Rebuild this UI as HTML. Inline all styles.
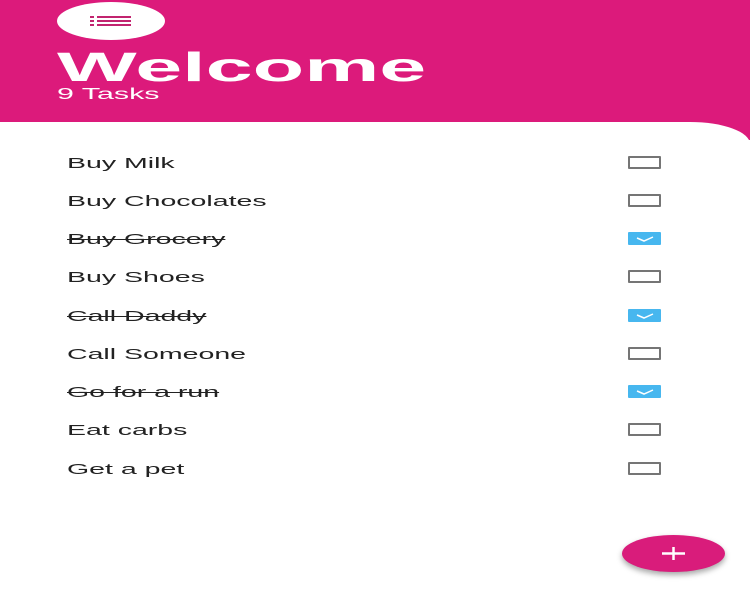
<!DOCTYPE html>
<html><head><style>
body{margin:0;width:750px;height:583px;overflow:hidden;background:#fff;font-family:"Liberation Sans",sans-serif;position:relative}
.hdr{position:absolute;left:0;top:0;width:750px;height:140px;background:#dc1a7b}
.card{position:absolute;left:0;top:122px;width:750px;height:470px;background:#fff;border-top-right-radius:60px 22px}
.menu{position:absolute;left:57px;top:2px;width:108px;height:38px;border-radius:50%;background:#fff}
.menu i{position:absolute;left:33px;height:2px;background:#c2246f;width:42px}
.t{position:absolute;transform-origin:0 0;white-space:nowrap}
.w{left:57px;top:44px;font-size:41px;font-weight:bold;color:#fff;transform:scaleX(2.06)}
.s{left:57px;top:86px;font-size:16px;color:#fff;transform:scaleX(1.9)}
.it{left:67px;font-size:15px;color:#222;transform:scaleX(1.9)}
.it.d{text-decoration:line-through}
.cb{position:absolute;left:628px;width:29px;height:9px;border:2px solid #757575;border-radius:1px}
.cb.c{background:#47b7ef;border-color:#47b7ef}
.fab{position:absolute;left:622px;top:535px;width:103px;height:37px;border-radius:50%;background:#d91c7b;box-shadow:0 3px 6px rgba(0,0,0,.35)}
</style></head><body>
<div class="hdr"></div>
<div class="card"></div>
<div class="menu"><i style="top:14px;width:4px"></i><i style="top:14px;left:40px;width:34px"></i><i style="top:18px;width:4px"></i><i style="top:18px;left:40px;width:34px"></i><i style="top:22px;width:4px"></i><i style="top:22px;left:40px;width:34px"></i></div>
<div class="t w">Welcome</div>
<div class="t s">9 Tasks</div>

<div class="t it" style="top:155px">Buy Milk</div>
<div class="t it" style="top:193px">Buy Chocolates</div>
<div class="t it d" style="top:231px">Buy Grocery</div>
<div class="t it" style="top:269px">Buy Shoes</div>
<div class="t it d" style="top:308px">Call Daddy</div>
<div class="t it" style="top:346px">Call Someone</div>
<div class="t it d" style="top:384px">Go for a run</div>
<div class="t it" style="top:422px">Eat carbs</div>
<div class="t it" style="top:461px">Get a pet</div>

<div class="cb" style="top:156px"></div>
<div class="cb" style="top:194px"></div>
<div class="cb c" style="top:232px"><svg width="29" height="9" style="position:absolute;left:0;top:0"><path d="M7 4 L14 7 L23 3" stroke="#fff" stroke-width="1.5" fill="none"/></svg></div>
<div class="cb" style="top:270px"></div>
<div class="cb c" style="top:309px"><svg width="29" height="9" style="position:absolute;left:0;top:0"><path d="M7 4 L14 7 L23 3" stroke="#fff" stroke-width="1.5" fill="none"/></svg></div>
<div class="cb" style="top:347px"></div>
<div class="cb c" style="top:385px"><svg width="29" height="9" style="position:absolute;left:0;top:0"><path d="M7 4 L14 7 L23 3" stroke="#fff" stroke-width="1.5" fill="none"/></svg></div>
<div class="cb" style="top:423px"></div>
<div class="cb" style="top:462px"></div>

<div class="fab"><svg width="103" height="37" style="position:absolute;left:0;top:0"><path d="M40 18.5 H63 M51.5 12 V25" stroke="#fff" stroke-width="2.5"/></svg></div>
</body></html>
